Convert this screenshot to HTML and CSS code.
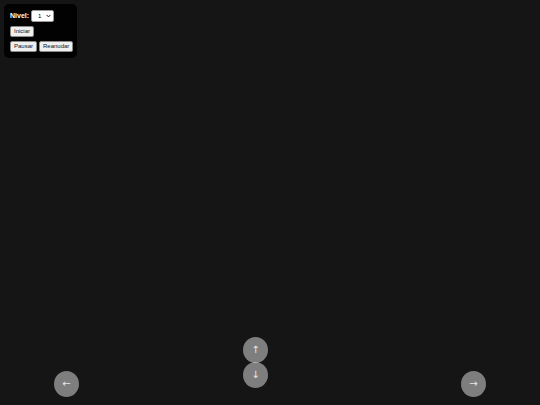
FILE: index.html
```html
<!DOCTYPE html>
<html lang="es">
<head>
<meta charset="utf-8">
<title>Juego</title>
<link rel="stylesheet" href="styles.css">
</head>
<body>
<div class="panel">
  <div class="row">
    <label class="label" for="nivel">Nivel:</label>
    <span class="select-wrap">
      <select id="nivel" class="select">
        <option>1</option>
        <option>2</option>
        <option>3</option>
      </select>
      <svg class="chev" width="5" height="4" viewBox="0 0 5 4"><path d="M0.6 0.9 L2.5 2.9 L4.4 0.9" fill="none" stroke="#222" stroke-width="1"/></svg>
    </span>
  </div>
  <div class="row">
    <button class="btn">Iniciar</button>
  </div>
  <div class="row">
    <button class="btn">Pausar</button>
    <button class="btn">Reanudar</button>
  </div>
</div>
<button class="ctl ctl-up">↑</button>
<button class="ctl ctl-down">↓</button>
<button class="ctl ctl-left">←</button>
<button class="ctl ctl-right">→</button>
</body>
</html>
```
FILE: styles.css
```css
html, body {
  margin: 0;
  padding: 0;
  width: 540px;
  height: 405px;
  background: #151515;
  overflow: hidden;
  font-family: "Liberation Sans", Arial, sans-serif;
}
.panel {
  position: absolute;
  top: 4px;
  left: 4px;
  width: 73px;
  box-sizing: border-box;
  padding: 6px;
  background: #020202;
  border-radius: 5px;
  display: flex;
  flex-direction: column;
  gap: 3px;
}
.row {
  display: flex;
  align-items: center;
  gap: 2px;
}
.row + .row {
  margin-top: 1px;
}
.label {
  color: #ffffff;
  font-weight: bold;
  font-size: 7px;
  line-height: 12px;
}
.select-wrap {
  position: relative;
  display: inline-block;
  width: 23px;
  height: 12px;
}
.select {
  -webkit-appearance: none;
  appearance: none;
  display: block;
  width: 23px;
  height: 12px;
  box-sizing: border-box;
  font-size: 6px;
  line-height: 10px;
  padding: 0 0 0 6px;
  margin: 0;
  border: 1px solid #9a9a9a;
  border-radius: 2px;
  background: #ffffff;
  color: #000;
  font-family: "Liberation Sans", Arial, sans-serif;
}
.chev {
  position: absolute;
  right: 3px;
  top: 4px;
  pointer-events: none;
}
.btn {
  height: 11px;
  margin: 0;
  padding: 0 3px;
  font-size: 6px;
  font-family: "Liberation Sans", Arial, sans-serif;
  color: #111;
  background: #efefef;
  border: 1px solid #8a8a8a;
  border-radius: 2px;
  line-height: 9px;
}
.ctl {
  position: absolute;
  width: 25px;
  height: 26px;
  margin: 0;
  padding: 0;
  border: none;
  border-radius: 50%;
  background: rgba(255, 255, 255, 0.45);
  color: #e8e8e8;
  font-family: "DejaVu Sans", sans-serif;
  font-size: 10px;
  line-height: 26px;
  text-align: center;
}
.ctl-up { left: 243px; top: 337px; }
.ctl-down { left: 243px; top: 362px; }
.ctl-left { left: 54px; top: 371px; }
.ctl-right { left: 461px; top: 371px; }
```
